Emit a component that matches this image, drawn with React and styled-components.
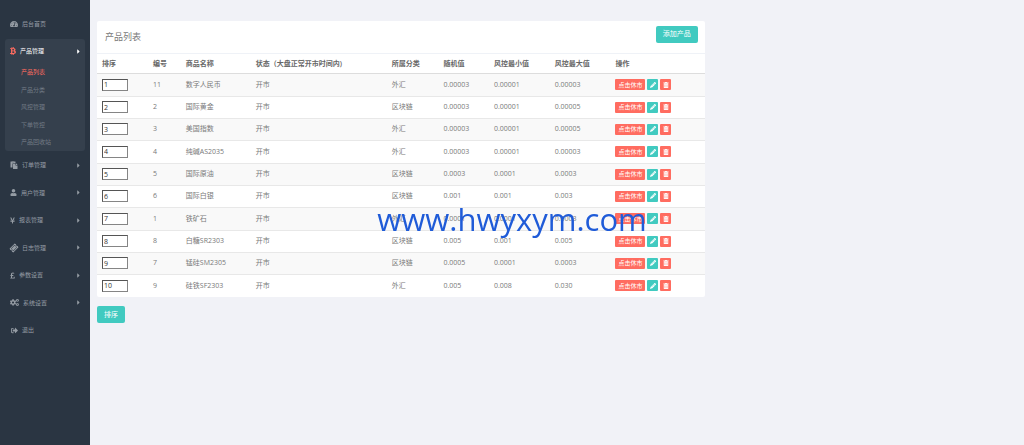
import React from 'react';
import styled, { createGlobalStyle, css } from 'styled-components';
import {
  FaTachometerAlt, FaBtc, FaPaste, FaUser, FaYenSign, FaTicketAlt, FaPoundSign,
  FaCogs, FaSignOutAlt, FaCaretRight, FaPencilAlt, FaTrashAlt,
} from 'react-icons/fa';

const color = {
  page: '#f1f2f7',
  side: '#2a3542',
  sideActive: '#35404d',
  red: '#ff6c60',
  teal: '#41cac0',
  text: '#797979',
};

const GlobalStyle = createGlobalStyle`
  * { box-sizing: border-box; }
  body {
    margin: 0;
    background: ${color.page};
    color: ${color.text};
    font: 7px/10px "Open Sans", "Noto Sans CJK SC", sans-serif;
  }
  button, input { font: inherit; }
  a { color: inherit; text-decoration: none; }
  ul { list-style: none; margin: 0; padding: 0; }
`;

const Layout = styled.div`
  display: flex;
  min-height: 100vh;
`;

const Sidebar = styled.nav`
  flex: 0 0 90px;
  padding: 10px 5px;
  background: ${color.side};
  color: #959ca4;
  font-size: 6px;
`;

const Menu = styled.ul`
  > li:nth-child(even) > a { height: 27px; }
`;

const MenuLink = styled.a`
  display: flex;
  align-items: center;
  height: 28px;
  padding: 0 5px;
`;

const MenuIcon = styled.span`
  display: flex;
  flex: none;
  justify-content: center;
  width: ${(p) => p.$width}px;
  margin-right: 4px;
  font-size: ${(p) => p.$size || 7}px;
  ${(p) => p.$tilt && css`svg { transform: rotate(-45deg); }`}
`;

const Caret = styled(FaCaretRight)`
  width: 3px;
  height: 7px;
  margin-left: auto;
`;

const ActiveGroup = styled.div`
  margin-top: 1px;
  border-radius: 3px;
  background: ${color.sideActive};
`;

const GroupLink = styled(MenuLink)`
  height: 24px;
  color: #fff;
  ${MenuIcon} { color: ${color.red}; }
`;

const SubLink = styled.a`
  display: flex;
  align-items: center;
  height: 18px;
  padding-left: 16px;
  color: ${(p) => (p.$active ? color.red : '#727b85')};
  li:nth-child(even) > & { height: 17px; }
`;

const Main = styled.main`
  flex: 1;
  min-width: 0;
  padding-top: 21px;
`;

const Column = styled.form`
  width: 66.6667%;
  padding: 0 8px 0 7px;
`;

const Card = styled.section`
  overflow: hidden;
  border-radius: 2px;
  background: #fff;
`;

const CardHeader = styled.header`
  display: flex;
  align-items: center;
  justify-content: space-between;
  height: 33px;
  padding: 0 7px 0 8px;
  border-bottom: 1px solid #eff2f7;
`;

const Title = styled.h1`
  margin: 0;
  font-size: 9px;
  font-weight: 400;
  line-height: 12px;
`;

const Button = styled.button`
  height: 17px;
  padding: 0 7px;
  border: 0;
  border-radius: 2px;
  background: ${color.teal};
  color: #fff;
  white-space: nowrap;
`;

const AddButton = styled(Button)`
  margin-bottom: 6px;
`;

const SortButton = styled(Button)`
  margin-top: 9px;
`;

const Table = styled.table`
  width: 100%;
  table-layout: fixed;
  border-collapse: collapse;
  white-space: nowrap;
  th, td { padding: 0 5px; text-align: left; }
  th {
    height: 19px;
    padding-top: 2px;
    border-bottom: 1px solid #ddd;
    color: #666;
    font-weight: 600;
  }
  td { border-bottom: 1px solid #e8e8e8; }
  tbody tr:last-child td { border-bottom: 0; }
`;

const Col = styled.col`
  width: ${(p) => p.$share}%;
`;

const Row = styled.tr`
  height: 22px;
  &:nth-child(3n + 1) { height: 23px; }
  &:nth-child(odd) { background: #f9f9f9; }
`;

const OrderInput = styled.input`
  display: block;
  width: 26px;
  height: 12px;
  padding: 0 1px;
  border: 1px solid;
  border-color: #555 #858585 #858585 #555;
  background: #fff;
  color: #333;
`;

const Actions = styled.div`
  display: flex;
  gap: 2px;
`;

const SmallButton = styled.button`
  display: flex;
  align-items: center;
  justify-content: center;
  width: ${(p) => (p.$wide ? 30 : 11)}px;
  height: 11px;
  padding: 0;
  border: 0;
  border-radius: 1px;
  background: ${(p) => (p.$teal ? color.teal : color.red)};
  color: #fff;
  font-size: 6px;
`;

const Watermark = styled.div`
  position: fixed;
  inset: 0;
  display: flex;
  align-items: center;
  justify-content: center;
  padding-bottom: 8px;
  color: #1f5bd8;
  font-size: 31px;
  font-weight: 500;
  line-height: 40px;
  pointer-events: none;
`;

const subItems = ['产品列表', '产品分类', '风控管理', '下单管控', '产品回收站'];

const menuItems = [
  { label: '订单管理', icon: FaPaste, width: 8, size: 8 },
  { label: '用户管理', icon: FaUser, width: 7 },
  { label: '报表管理', icon: FaYenSign, width: 5 },
  { label: '日志管理', icon: FaTicketAlt, width: 8, size: 8, tilt: true },
  { label: '参数设置', icon: FaPoundSign, width: 5 },
  { label: '系统设置', icon: FaCogs, width: 9, size: 9 },
  { label: '退出', icon: FaSignOutAlt, width: 8, leaf: true },
];

const columns = [
  ['排序', 8.4], ['编号', 5.4], ['商品名称', 11.5], ['状态（大盘正常开市时间内)', 22.4],
  ['所属分类', 8.5], ['随机值', 8.3], ['风控最小值', 10], ['风控最大值', 10], ['操作', 15.5],
];

const products = [
  ['11', '数字人民币', '外汇', '0.00003', '0.00001', '0.00003'],
  ['2', '国际黄金', '区块链', '0.00003', '0.00001', '0.00005'],
  ['3', '美国指数', '外汇', '0.00003', '0.00001', '0.00005'],
  ['4', '纯碱AS2035', '外汇', '0.00003', '0.00001', '0.00003'],
  ['5', '国际原油', '区块链', '0.0003', '0.0001', '0.0003'],
  ['6', '国际白银', '区块链', '0.001', '0.001', '0.003'],
  ['1', '铁矿石', '外汇', '0.0001', '0.0001', '0.0003'],
  ['8', '白糖SR2303', '区块链', '0.005', '0.001', '0.005'],
  ['7', '锰硅SM2305', '区块链', '0.0005', '0.0001', '0.0003'],
  ['9', '硅铁SF2303', '外汇', '0.005', '0.008', '0.030'],
];

function SideMenu() {
  return (
    <Sidebar>
      <MenuLink href="#home">
        <MenuIcon $width={8} $size={8}><FaTachometerAlt /></MenuIcon>
        后台首页
      </MenuLink>
      <ActiveGroup>
        <GroupLink href="#products">
          <MenuIcon $width={6} $size={8}><FaBtc /></MenuIcon>
          产品管理
          <Caret />
        </GroupLink>
        <ul>
          {subItems.map((label, i) => (
            <li key={label}>
              <SubLink href={`#product-${i}`} $active={i === 0}>{label}</SubLink>
            </li>
          ))}
        </ul>
      </ActiveGroup>
      <Menu>
        {menuItems.map(({ label, icon: Icon, width, size, tilt, leaf }, i) => (
          <li key={label}>
            <MenuLink href={`#menu-${i}`}>
              <MenuIcon $width={width} $size={size} $tilt={tilt}><Icon /></MenuIcon>
              {label}
              {!leaf && <Caret />}
            </MenuLink>
          </li>
        ))}
      </Menu>
    </Sidebar>
  );
}

function ProductRow({ order, product }) {
  const [id, name, category, random, min, max] = product;
  return (
    <Row>
      <td><OrderInput type="text" aria-label={`${name} 排序`} defaultValue={order} /></td>
      <td>{id}</td>
      <td>{name}</td>
      <td>开市</td>
      <td>{category}</td>
      <td>{random}</td>
      <td>{min}</td>
      <td>{max}</td>
      <td>
        <Actions>
          <SmallButton type="button" $wide>点击休市</SmallButton>
          <SmallButton type="button" $teal aria-label="编辑"><FaPencilAlt /></SmallButton>
          <SmallButton type="button" aria-label="删除"><FaTrashAlt /></SmallButton>
        </Actions>
      </td>
    </Row>
  );
}

export default function App() {
  return (
    <>
      <GlobalStyle />
      <Layout>
        <SideMenu />
        <Main>
          <Column onSubmit={(e) => e.preventDefault()}>
            <Card>
              <CardHeader>
                <Title>产品列表</Title>
                <AddButton type="button">添加产品</AddButton>
              </CardHeader>
              <Table>
                <colgroup>
                  {columns.map(([label, share]) => <Col key={label} $share={share} />)}
                </colgroup>
                <thead>
                  <tr>{columns.map(([label]) => <th key={label} scope="col">{label}</th>)}</tr>
                </thead>
                <tbody>
                  {products.map((product, i) => (
                    <ProductRow key={product[0]} order={i + 1} product={product} />
                  ))}
                </tbody>
              </Table>
            </Card>
            <SortButton type="submit">排序</SortButton>
          </Column>
        </Main>
      </Layout>
      <Watermark>www.hwyxym.com</Watermark>
    </>
  );
}
